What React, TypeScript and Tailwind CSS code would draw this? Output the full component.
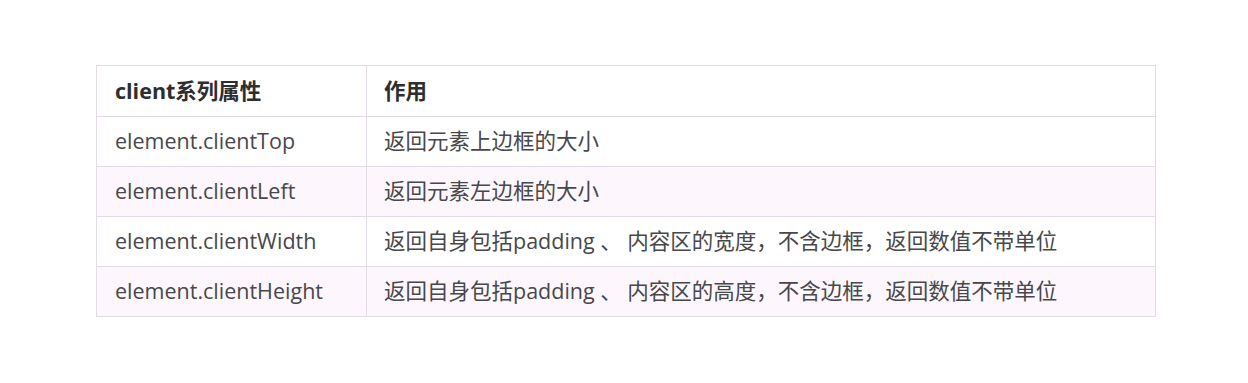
const rows = [
  ["element.clientTop", "返回元素上边框的大小"],
  ["element.clientLeft", "返回元素左边框的大小"],
  ["element.clientWidth", "返回自身包括padding 、 内容区的宽度，不含边框，返回数值不带单位"],
  ["element.clientHeight", "返回自身包括padding 、 内容区的高度，不含边框，返回数值不带单位"],
];

export default function App() {
  return (
    <div
      className="h-[383px] w-[1248px] bg-white pl-[96px] pt-[65px]"
      style={{ fontFamily: '"Open Sans", "Noto Sans CJK SC", sans-serif' }}
    >
      <table className="w-[1060px] border-collapse text-[21.5px] text-[#48484a]">
        <thead>
          <tr className="h-[51px]">
            <th className="w-[270px] border border-[#e3dbe6] pl-[18px] text-left font-bold text-[#2e2e30]">
              client系列属性
            </th>
            <th className="border border-[#e3dbe6] pl-[17px] text-left font-bold text-[#2e2e30]">作用</th>
          </tr>
        </thead>
        <tbody>
          {rows.map(([name, desc], i) => (
            <tr key={name} className={i % 2 === 1 ? "h-[50px] bg-[#fdf7fd]" : "h-[50px] bg-white"}>
              <td className="border border-[#e3dbe6] pl-[18px]">{name}</td>
              <td className="border border-[#e3dbe6] pl-[17px]">{desc}</td>
            </tr>
          ))}
        </tbody>
      </table>
    </div>
  );
}
